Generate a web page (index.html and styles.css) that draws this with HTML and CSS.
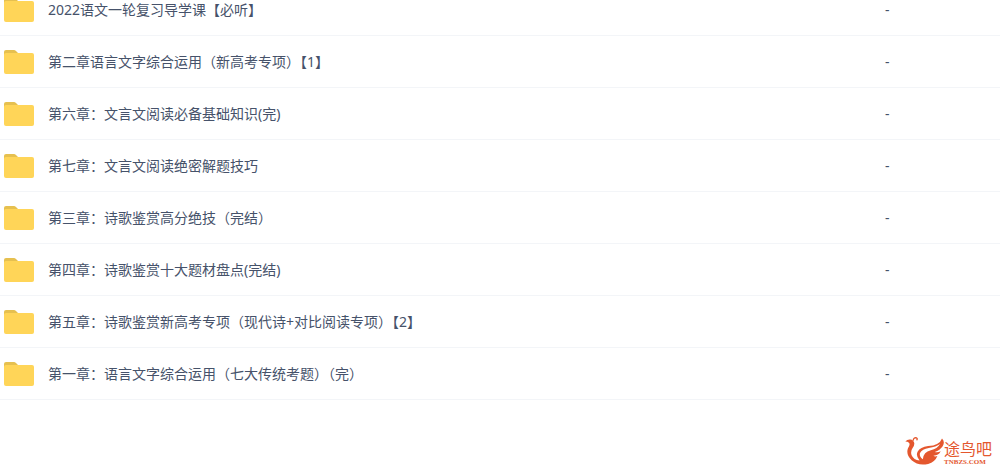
FILE: index.html
```html
<!DOCTYPE html>
<html lang="zh-CN">
<head>
<meta charset="utf-8">
<title>文件列表</title>
<link rel="stylesheet" href="styles.css">
</head>
<body>
<svg class="defs" aria-hidden="true">
  <symbol id="folder" viewBox="0 0 30 26">
    <path d="M0 12V3Q0 1 2 1H10Q11 1 12 2L14 4V12Z" fill="#e6c04f"/>
    <rect x="0" y="4" width="30" height="21" rx="2" fill="#ffd558"/>
  </symbol>
</svg>
<main class="files">
  <table class="file-table">
    <tbody>
      <tr><td class="name"><a href="#"><svg class="folder"><use href="#folder"/></svg>2022语文一轮复习导学课【必听】</a></td><td class="size">-</td></tr>
      <tr><td class="name"><a href="#"><svg class="folder"><use href="#folder"/></svg>第二章语言文字综合运用（新高考专项）【1】</a></td><td class="size">-</td></tr>
      <tr><td class="name"><a href="#"><svg class="folder"><use href="#folder"/></svg>第六章：文言文阅读必备基础知识(完)</a></td><td class="size">-</td></tr>
      <tr><td class="name"><a href="#"><svg class="folder"><use href="#folder"/></svg>第七章：文言文阅读绝密解题技巧</a></td><td class="size">-</td></tr>
      <tr><td class="name"><a href="#"><svg class="folder"><use href="#folder"/></svg>第三章：诗歌鉴赏高分绝技（完结）</a></td><td class="size">-</td></tr>
      <tr><td class="name"><a href="#"><svg class="folder"><use href="#folder"/></svg>第四章：诗歌鉴赏十大题材盘点(完结)</a></td><td class="size">-</td></tr>
      <tr><td class="name"><a href="#"><svg class="folder"><use href="#folder"/></svg>第五章：诗歌鉴赏新高考专项（现代诗+对比阅读专项）【2】</a></td><td class="size">-</td></tr>
      <tr><td class="name"><a href="#"><svg class="folder"><use href="#folder"/></svg>第一章：语言文字综合运用（七大传统考题）（完）</a></td><td class="size">-</td></tr>
    </tbody>
  </table>
</main>
<footer class="brand">
  <svg class="bird" viewBox="8 12 118 86" aria-hidden="true">
    <path d="M9 26Q15 19 24 20Q34 21 36 31Q37 39 31 46Q24 56 28 68Q34 82 52 84Q40 70 46 57Q54 43 78 40Q112 38 120 17Q130 27 122 41Q114 53 98 58Q108 60 116 56Q110 69 94 69Q99 73 106 70Q99 88 78 94Q48 101 28 83Q10 66 17 47Q25 35 20 30Q16 26 9 26Z" fill="#e4572e"/>
    <path d="M53 62Q60 49 80 46Q102 43 114 34Q106 48 86 53Q64 58 62 80Q51 73 53 62Z" fill="#fff"/>
    <path d="M33 22Q34 14 42 15Q47 17 44 21" fill="none" stroke="#e4572e" stroke-width="4" stroke-linecap="round"/>
  </svg>
  <div class="brand-text">
    <span class="brand-name">途鸟吧</span>
    <span class="brand-site">TNBZS.COM</span>
  </div>
</footer>
</body>
</html>
```

FILE: styles.css
```css
body {
  margin: 0;
  min-height: 100vh;
  display: flex;
  flex-direction: column;
  background: #fff;
  color: #46526a;
  font: 14px/20px "Noto Sans", "Noto Sans CJK SC", sans-serif;
}

.defs {
  position: absolute;
  width: 0;
  height: 0;
}

.files {
  margin-top: -16px;
}

.file-table {
  width: 100%;
  border-collapse: separate;
  border-spacing: 0;
  table-layout: fixed;
}

.file-table td {
  box-sizing: border-box;
  height: 52px;
  padding: 0;
  border-bottom: 1px solid #f3f5f8;
}

.name a {
  display: flex;
  align-items: center;
  gap: 14px;
  padding-left: 4px;
  color: inherit;
  text-decoration: none;
}

.folder {
  width: 30px;
  height: 26px;
  flex: none;
}

.file-table .size {
  width: 12%;
  padding-left: 5px;
}

.brand {
  display: flex;
  justify-content: flex-end;
  align-items: flex-end;
  margin-top: auto;
  padding: 0 8px 4px 0;
  color: #e4572e;
}

.bird {
  width: 39px;
  height: 30px;
}

.brand-text {
  display: flex;
  flex-direction: column;
}

.brand-name {
  font-size: 16px;
  line-height: 18px;
}

.brand-site {
  font: bold 7px/8px "Liberation Serif", serif;
}
```
